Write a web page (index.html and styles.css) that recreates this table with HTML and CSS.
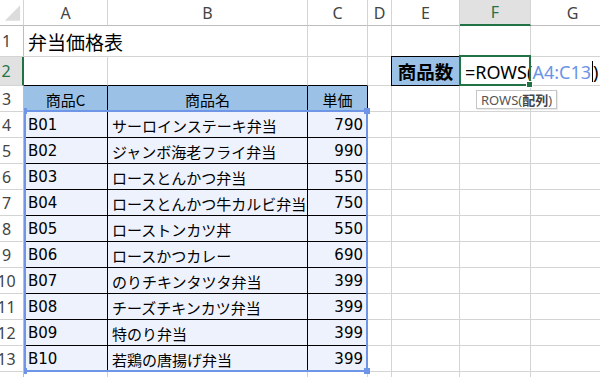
FILE: index.html
```html
<!DOCTYPE html>
<html lang="ja">
<head>
<meta charset="utf-8">
<title>弁当価格表</title>
<link rel="stylesheet" href="styles.css">
</head>
<body>
<div class="sheet">
  <!-- column headers -->
  <div class="c ch corner"><svg width="24" height="26" viewBox="0 0 24 26"><polygon points="21,5 21,21 5,21" fill="#dcdcdc"/></svg></div>
  <div class="c ch">A</div>
  <div class="c ch">B</div>
  <div class="c ch">C</div>
  <div class="c ch">D</div>
  <div class="c ch">E</div>
  <div class="c ch ch-sel">F</div>
  <div class="c ch">G</div>

  <!-- row 1 -->
  <div class="c rh">1</div>
  <div class="c title">弁当価格表</div>
  <div class="c"></div>
  <div class="c"></div>
  <div class="c"></div>
  <div class="c"></div>
  <div class="c"></div>
  <div class="c"></div>

  <!-- row 2 -->
  <div class="c rh rh-sel">2</div>
  <div class="c tb"></div>
  <div class="c tb"></div>
  <div class="c tb"></div>
  <div class="c"></div>
  <div class="c kbox">商品数</div>
  <div class="c editing">
    <span class="formula">=ROWS(<span class="ref">A4:C13</span><span class="caret"></span>)</span>
    <div class="tip">ROWS(<b>配列</b>)</div>
  </div>
  <div class="c"></div>

  <!-- row 3 -->
  <div class="c rh">3</div>
  <div class="c th">商品C</div>
  <div class="c th">商品名</div>
  <div class="c th">単価</div>
  <div class="c"></div>
  <div class="c"></div>
  <div class="c"></div>
  <div class="c"></div>

  <div class="c rh">4</div>
  <div class="c td">B01</div>
  <div class="c td">サーロインステーキ弁当</div>
  <div class="c td num">790</div>
  <div class="c"></div><div class="c"></div><div class="c"></div><div class="c"></div>

  <div class="c rh">5</div>
  <div class="c td">B02</div>
  <div class="c td">ジャンボ海老フライ弁当</div>
  <div class="c td num">990</div>
  <div class="c"></div><div class="c"></div><div class="c"></div><div class="c"></div>

  <div class="c rh">6</div>
  <div class="c td">B03</div>
  <div class="c td">ロースとんかつ弁当</div>
  <div class="c td num">550</div>
  <div class="c"></div><div class="c"></div><div class="c"></div><div class="c"></div>

  <div class="c rh">7</div>
  <div class="c td">B04</div>
  <div class="c td">ロースとんかつ牛カルビ弁当</div>
  <div class="c td num">750</div>
  <div class="c"></div><div class="c"></div><div class="c"></div><div class="c"></div>

  <div class="c rh">8</div>
  <div class="c td">B05</div>
  <div class="c td">ローストンカツ丼</div>
  <div class="c td num">550</div>
  <div class="c"></div><div class="c"></div><div class="c"></div><div class="c"></div>

  <div class="c rh">9</div>
  <div class="c td">B06</div>
  <div class="c td">ロースかつカレー</div>
  <div class="c td num">690</div>
  <div class="c"></div><div class="c"></div><div class="c"></div><div class="c"></div>

  <div class="c rh">10</div>
  <div class="c td">B07</div>
  <div class="c td">のりチキンタツタ弁当</div>
  <div class="c td num">399</div>
  <div class="c"></div><div class="c"></div><div class="c"></div><div class="c"></div>

  <div class="c rh">11</div>
  <div class="c td">B08</div>
  <div class="c td">チーズチキンカツ弁当</div>
  <div class="c td num">399</div>
  <div class="c"></div><div class="c"></div><div class="c"></div><div class="c"></div>

  <div class="c rh">12</div>
  <div class="c td">B09</div>
  <div class="c td">特のり弁当</div>
  <div class="c td num">399</div>
  <div class="c"></div><div class="c"></div><div class="c"></div><div class="c"></div>

  <div class="c rh">13</div>
  <div class="c td">B10</div>
  <div class="c td">若鶏の唐揚げ弁当</div>
  <div class="c td num">399</div>
  <div class="c"></div><div class="c"></div><div class="c"></div><div class="c"></div>

  <div class="c rh"></div>
  <div class="c"></div><div class="c"></div><div class="c"></div><div class="c"></div><div class="c"></div><div class="c"></div><div class="c"></div>

  <!-- reference range highlight (overlay) -->
  <div class="range">
    <span class="hd hd-tl"></span><span class="hd hd-tr"></span>
    <span class="hd hd-bl"></span><span class="hd hd-br"></span>
  </div>
</div>
</body>
</html>
```

FILE: styles.css
```css
html, body {
  margin: 0;
  padding: 0;
  background: #fff;
  overflow: hidden;
}

body {
  font-family: "DejaVu Sans", "Noto Sans CJK JP", sans-serif;
}

.sheet {
  position: relative;
  display: grid;
  grid-template-columns: 24px 84px 200px 60px 24px 68px 71px 84px;
  grid-template-rows: 26px 31px 29px repeat(11, 26px) 26px;
  width: 600px;
  height: 377px;
  overflow: hidden;
}

.c {
  box-sizing: border-box;
  border-right: 1px solid #d4d4d4;
  border-bottom: 1px solid #d4d4d4;
  display: flex;
  align-items: center;
  padding: 0 4px;
  font-size: 15px;
  color: #000;
  white-space: nowrap;
  overflow: hidden;
  min-width: 0;
}

/* column headers */
.ch {
  justify-content: center;
  font-family: "Noto Sans", "Noto Sans CJK JP", sans-serif;
  font-size: 16px;
  color: #444;
  border-bottom-color: #bdbdbd;
  padding: 0;
}
.corner {
  padding: 0;
  align-items: stretch;
  justify-content: stretch;
  position: relative;
  z-index: 3;
  background: #fff;
}
.ch-sel {
  background: #e1e1e1;
  color: #217346;
  border-bottom: 2px solid #217346;
}

/* row headers */
.rh {
  justify-content: center;
  padding: 0 10px 0 0;
  overflow: visible;
  font-family: "Noto Sans", "Noto Sans CJK JP", sans-serif;
  font-size: 16px;
  color: #444;
  border-right-color: #bdbdbd;
  position: relative;
  z-index: 3;
  background: #fff;
}
.rh-sel {
  background: #e1e1e1;
  color: #217346;
  border-right: 2px solid #217346;
}

/* title */
.title {
  font-family: "Noto Sans CJK JP", sans-serif;
  font-size: 19px;
  overflow: visible;
  border-right: none;
}

/* top edge of table */
.tb {
  border-bottom-color: #000;
}

/* label box E2 */
.kbox {
  position: relative;
  z-index: 1;
  margin: -1px 0 0 -1px;
  border: 1px solid #000;
  background: #9bc2e6;
  justify-content: center;
  font-family: "Noto Sans CJK JP", sans-serif;
  font-weight: 700;
  font-size: 18.5px;
  padding: 0;
}

/* cell in edit mode */
.editing {
  position: relative;
  z-index: 4;
  overflow: visible;
  padding-left: 5px;
}
.editing::after {
  content: "";
  position: absolute;
  top: -2px;
  left: -1px;
  right: -1px;
  bottom: -1px;
  border: 2px solid #217346;
  pointer-events: none;
}
.editing::before {
  content: "";
  position: absolute;
  right: -3px;
  bottom: -3px;
  width: 5px;
  height: 5px;
  background: #217346;
  border: 1px solid #fff;
  z-index: 1;
}
.formula {
  font-family: "Noto Sans", sans-serif;
  font-size: 18px;
  display: flex;
  align-items: center;
  padding-top: 1px;
}
.ref {
  color: #6a94e6;
}
.caret {
  display: inline-block;
  width: 0;
  height: 21px;
  border-left: 1.5px solid #000;
  margin: 0 0 0 1px;
}

/* function tooltip */
.tip {
  position: absolute;
  left: 16px;
  top: 33px;
  z-index: 6;
  box-sizing: border-box;
  height: 19px;
  padding: 0 4px;
  display: flex;
  align-items: center;
  background: #fff;
  border: 1px solid #c6c6c6;
  box-shadow: 1px 1px 1px rgba(0, 0, 0, 0.08);
  font-family: "Noto Sans", "Noto Sans CJK JP", sans-serif;
  font-size: 13px;
  color: #555;
}
.tip b {
  font-family: "Noto Sans CJK JP", sans-serif;
  font-weight: 700;
  color: #444;
}

/* table header row */
.th {
  background: #9bc2e6;
  border-right-color: #000;
  border-bottom-color: #000;
  justify-content: center;
  font-family: "Noto Sans CJK JP", sans-serif;
  padding-top: 1px;
}

/* table data */
.td {
  background: #eef2fc;
  border-right-color: #000;
  border-bottom-color: #000;
  padding-top: 1px;
}
.num {
  justify-content: flex-end;
  padding-right: 4px;
}

/* referenced range highlight */
.range {
  position: absolute;
  left: 24px;
  top: 110px;
  width: 344px;
  height: 262px;
  box-sizing: border-box;
  border: 2px solid #6f96e6;
  z-index: 2;
  pointer-events: none;
}
.hd {
  position: absolute;
  width: 6px;
  height: 6px;
  background: #6f96e6;
}
.hd-tl { left: -5px; top: -4px; }
.hd-tr { right: -4px; top: -4px; }
.hd-bl { left: -5px; bottom: -4px; }
.hd-br { right: -4px; bottom: -4px; }
```
